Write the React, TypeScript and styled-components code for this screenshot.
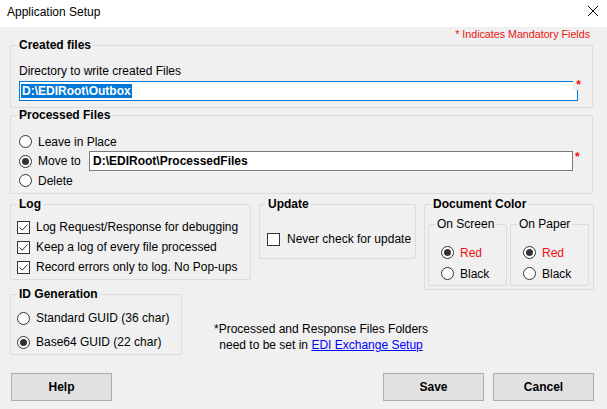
import React from 'react';
import styled, { createGlobalStyle } from 'styled-components';

const C = {
  bg: '#f0f0f0', border: '#dcdcdc', text: '#000', red: '#ee1111',
  blue: '#0078d7', link: '#0000ff', box: '#333333', btn: '#e1e1e1', btnBorder: '#adadad',
};

const Global = createGlobalStyle`
  html, body { margin:0; padding:0; background:${C.bg}; }
  body { font-family:'Liberation Sans', Arial, sans-serif; font-size:12px; color:${C.text}; }
`;

const Window = styled.div`
  width:607px; height:409px; display:flex; flex-direction:column;
  background:${C.bg}; overflow:hidden;
`;
const TitleBar = styled.div`
  height:27px; flex-shrink:0; background:#fff;
  display:flex; align-items:flex-start; padding:5px 9px 0 7px; box-sizing:border-box;
  line-height:14px;
`;
const CloseBtn = styled.div`
  margin-left:auto; margin-top:1px; width:10px; height:10px; display:flex;
`;
const Body = styled.div`
  display:flex; flex-direction:column; padding:0 14px 0 10px;
`;
const MandRow = styled.div`
  height:11px; line-height:14px; text-align:right; padding-right:3px;
  font-size:10.7px; color:${C.red};
`;
const Group = styled.fieldset<{ $w?: number }>`
  margin:0; padding:0; min-width:0; border:1px solid ${C.border}; border-radius:2px;
  ${p => (p.$w ? `width:${p.$w}px; box-sizing:border-box;` : '')}
`;
const Legend = styled.legend<{ $plain?: boolean }>`
  padding:0 2px; margin-left:6px; line-height:14px;
  font-weight:${p => (p.$plain ? 'normal' : 'bold')};
`;
const Content = styled.div<{ $pad: string; $gap?: number; $row?: boolean }>`
  padding:${p => p.$pad};
  display:flex; flex-direction:${p => (p.$row ? 'row' : 'column')};
  gap:${p => p.$gap ?? 0}px;
`;
const FieldLabel = styled.div`
  line-height:14px;
`;
const InputWrap = styled.div`
  position:relative; margin-top:3px; width:559px;
`;
const SelInput = styled.div`
  height:20px; box-sizing:border-box; border:1px solid ${C.blue}; background:#fff;
  display:flex; align-items:center; padding:0 1px;
`;
const Selected = styled.span`
  background:${C.blue}; color:#fff; font-weight:bold; line-height:14px; padding:0 1px;
`;
const CornerStar = styled.span`
  position:absolute; right:-6px; top:-3px; width:11px; height:12px;
  background:${C.bg}; color:${C.red}; font-weight:bold; line-height:14px; text-align:center;
`;
const Row = styled.div<{ $h: number }>`
  display:flex; align-items:center; height:${p => p.$h}px;
`;
const Choice = styled.label<{ $gap?: number; $w?: number; $red?: boolean }>`
  display:flex; align-items:center; gap:${p => p.$gap ?? 6}px;
  line-height:14px; white-space:nowrap;
  ${p => (p.$w ? `width:${p.$w}px;` : '')}
  color:${p => (p.$red ? C.red : C.text)};
`;
const Circle = styled.span<{ $on?: boolean }>`
  width:13px; height:13px; box-sizing:border-box; border-radius:50%;
  border:1px solid ${C.box}; background:#fff; flex-shrink:0;
  display:flex; align-items:center; justify-content:center;
  &::after {
    content:''; width:7px; height:7px; border-radius:50%;
    background:${p => (p.$on ? C.box : 'transparent')};
  }
`;
const Square = styled.span`
  width:13px; height:13px; box-sizing:border-box; border:1px solid ${C.box};
  background:#fff; flex-shrink:0; display:flex;
`;
const TextBox = styled.div`
  width:484px; height:20px; box-sizing:border-box; border:1px solid #7a7a7a; background:#fff;
  font-weight:bold; line-height:18px; padding-left:3px;
`;
const Star = styled.span`
  align-self:flex-start; margin-left:2px; color:${C.red}; font-weight:bold; line-height:12px;
`;
const Mid = styled.div`
  margin-top:3px; display:grid;
  grid-template-columns:172px 69px 8px 157px 8px 170px;
  grid-template-rows:auto auto;
`;
const Cell = styled.div<{ $col: string; $row: string; $mt?: number }>`
  grid-column:${p => p.$col}; grid-row:${p => p.$row}; align-self:start; justify-self:start;
  margin-top:${p => p.$mt ?? 0}px; display:flex;
`;
const Note = styled.div`
  padding:41px 0 0 32px; line-height:16px; text-align:center;
`;
const Link = styled.a`
  color:${C.link}; text-decoration:underline; cursor:pointer;
`;
const Footer = styled.div`
  margin-top:18px; margin-right:-1px; display:flex; align-items:center;
`;
const Btn = styled.button<{ $push?: boolean }>`
  width:101px; height:28px; box-sizing:border-box; padding:0;
  background:${C.btn}; border:1px solid ${C.btnBorder}; border-radius:0;
  font-family:'Liberation Sans', Arial, sans-serif; font-size:12px; font-weight:bold; color:#000;
  margin-left:${p => (p.$push ? 'auto' : '9px')};
  &:first-child { margin-left:1px; }
`;

const Radio: React.FC<{ label: string; on?: boolean; red?: boolean; w?: number; gap?: number }> = ({ label, on, red, w, gap }) => (
  <Choice $red={red} $w={w} $gap={gap}>
    <Circle $on={on} />
    {label}
  </Choice>
);

const Check: React.FC<{ label: string; on?: boolean; gap?: number }> = ({ label, on, gap }) => (
  <Choice $gap={gap ?? 6}>
    <Square>
      {on && (
        <svg width="11" height="11" viewBox="0 0 11 11">
          <path d="M1.5 5.5 L4.2 8.2 L9.5 2.5" fill="none" stroke={C.box} strokeWidth="1" />
        </svg>
      )}
    </Square>
    {label}
  </Choice>
);

export default function App() {
  return (
    <>
      <Global />
      <Window>
        <TitleBar>
          Application Setup
          <CloseBtn>
            <svg width="10" height="10" viewBox="0 0 10 10">
              <path d="M0 0 L10 10 M10 0 L0 10" stroke="#000" strokeWidth="1" />
            </svg>
          </CloseBtn>
        </TitleBar>
        <Body>
          <MandRow>* Indicates Mandatory Fields</MandRow>

          <Group>
            <Legend>Created files</Legend>
            <Content $pad="12px 14px 6px 8px">
              <FieldLabel>Directory to write created Files</FieldLabel>
              <InputWrap>
                <SelInput>
                  <Selected>D:\EDIRoot\Outbox</Selected>
                </SelInput>
                <CornerStar>*</CornerStar>
              </InputWrap>
            </Content>
          </Group>

          <Group>
            <Legend>Processed Files</Legend>
            <Content $pad="10px 0 3px 8px">
              <Row $h={19}><Radio label="Leave in Place" /></Row>
              <Row $h={20}>
                <Radio label="Move to" on w={70} />
                <TextBox>D:\EDIRoot\ProcessedFiles</TextBox>
                <Star>*</Star>
              </Row>
              <Row $h={19}><Radio label="Delete" /></Row>
            </Content>
          </Group>

          <Mid>
            <Cell $col="1 / 3" $row="1">
              <Group $w={241}>
                <Legend>Log</Legend>
                <Content $pad="6px 0 2px 6px">
                  <Row $h={20}><Check label="Log Request/Response for debugging" on /></Row>
                  <Row $h={20}><Check label="Keep a log of every file processed" on /></Row>
                  <Row $h={20}><Check label="Record errors only to log. No Pop-ups" on /></Row>
                </Content>
              </Group>
            </Cell>

            <Cell $col="4" $row="1">
              <Group $w={157}>
                <Legend>Update</Legend>
                <Content $pad="18px 0 9px 7px">
                  <Row $h={20}><Check label="Never check for update" gap={7} /></Row>
                </Content>
              </Group>
            </Cell>

            <Cell $col="6" $row="1 / 3">
              <Group $w={170}>
                <Legend>Document Color</Legend>
                <Content $pad="6px 4px 3px 3px" $row $gap={3}>
                  <Group $w={79}>
                    <Legend $plain>On Screen</Legend>
                    <Content $pad="11px 0 1px 12px">
                      <Row $h={21}><Radio label="Red" on red /></Row>
                      <Row $h={21}><Radio label="Black" /></Row>
                    </Content>
                  </Group>
                  <Group $w={79}>
                    <Legend $plain>On Paper</Legend>
                    <Content $pad="11px 0 1px 12px">
                      <Row $h={21}><Radio label="Red" on red /></Row>
                      <Row $h={21}><Radio label="Black" /></Row>
                    </Content>
                  </Group>
                </Content>
              </Group>
            </Cell>

            <Cell $col="1" $row="2" $mt={7}>
              <Group $w={172}>
                <Legend>ID Generation</Legend>
                <Content $pad="6px 0 1px 6px" $gap={2}>
                  <Row $h={22}><Radio label="Standard GUID (36 char)" /></Row>
                  <Row $h={22}><Radio label="Base64 GUID (22 char)" on /></Row>
                </Content>
              </Group>
            </Cell>

            <Cell $col="2 / 7" $row="2">
              <Note>
                *Processed and Response Files Folders<br />
                need to be set in <Link>EDI Exchange Setup</Link>
              </Note>
            </Cell>
          </Mid>

          <Footer>
            <Btn>Help</Btn>
            <Btn $push>Save</Btn>
            <Btn>Cancel</Btn>
          </Footer>
        </Body>
      </Window>
    </>
  );
}
